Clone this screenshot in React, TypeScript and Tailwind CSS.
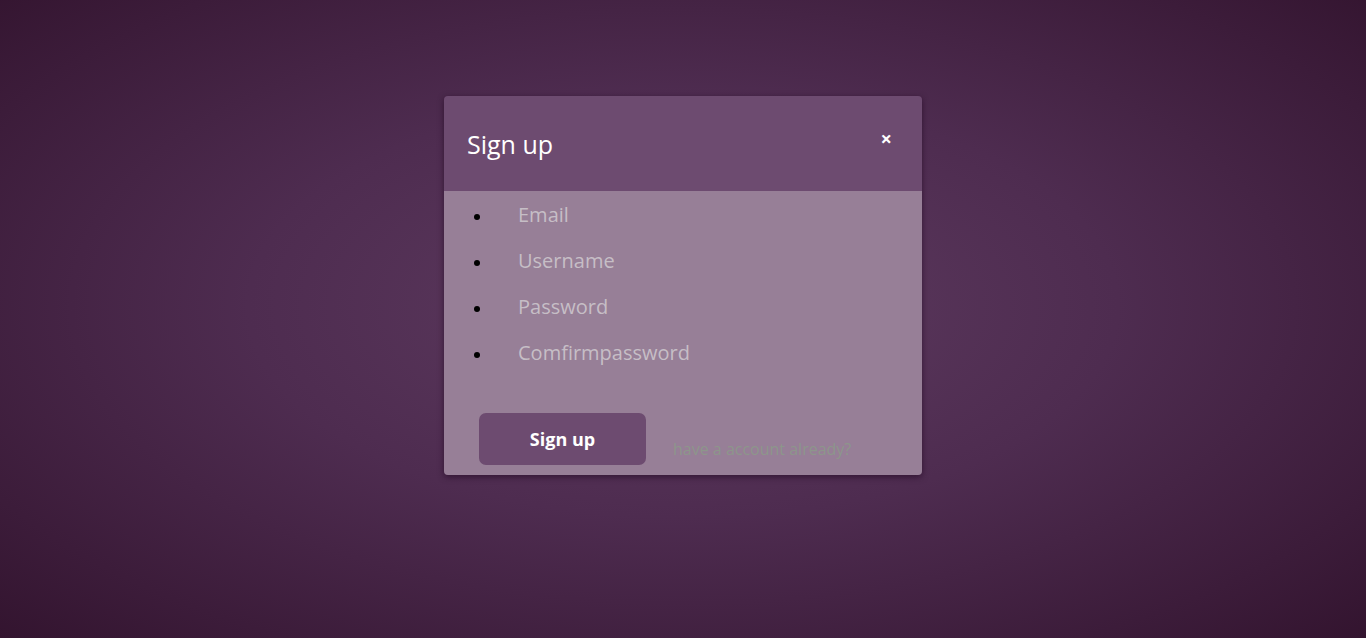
import React from "react";

const fields = ["Email", "Username", "Password", "Comfirmpassword"];

export default function App() {
  return (
    <div
      className="w-full h-[638px] overflow-hidden bg-[radial-gradient(ellipse_at_50%_48%,#5e3b60_0%,#4e2c50_45%,#33142f_100%)] font-['Open_Sans','Noto_Sans',sans-serif]"
    >
      <div className="pt-[96px] flex justify-center">
        <div className="w-[478px] rounded-[4px] shadow-[0_2px_6px_rgba(30,5,30,0.6)] overflow-hidden">
          <div className="h-[95px] bg-[#6d4b70] flex items-start justify-between pl-[23px] pr-[30px]">
            <h2 className="mt-[32px] text-[25px] leading-[32px] text-white">Sign up</h2>
            <button className="mt-[33px] text-[20px] font-bold leading-[20px] text-white">×</button>
          </div>
          <div className="bg-[#977f97] h-[284px] pt-[12px]">
            <ul className="list-disc pl-[48px] text-[#c6bec6]">
              {fields.map((f) => (
                <li key={f} className="h-[46px] leading-[24px] marker:text-black">
                  <span className="ml-[26px] text-[20px]">{f}</span>
                </li>
              ))}
            </ul>
            <div className="mt-[26px] pl-[35px] flex items-start gap-[27px]">
              <button className="w-[167px] h-[52px] rounded-[7px] bg-[#6d4b70] text-white font-bold text-[18px]">
                Sign up
              </button>
              <span className="mt-[24px] text-[16px] text-[#8d968b]">have a account already?</span>
            </div>
          </div>
        </div>
      </div>
    </div>
  );
}
